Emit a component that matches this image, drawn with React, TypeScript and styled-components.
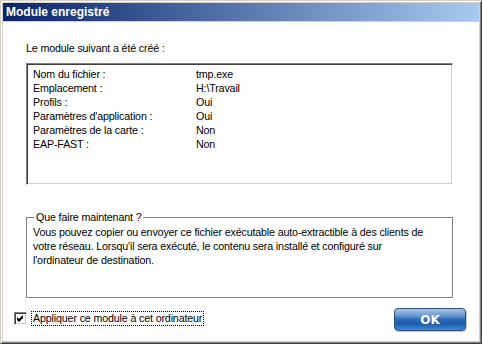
import styled, { createGlobalStyle } from 'styled-components';

const GlobalStyle = createGlobalStyle`
html, body {
  margin: 0;
  padding: 0;
  background: #ffffff;
}
body {
  font-family: "Liberation Sans", Arial, sans-serif;
  font-size: 10.7px;
  letter-spacing: -0.15px;
  color: #000000;
}
`;

const Window = styled.div`
box-sizing: border-box;
width: 482px;
height: 344px;
background: #ffffff;
border: 1px solid;
border-color: #d4d0c8 #404040 #404040 #d4d0c8;
box-shadow: inset 1px 1px 0 #ffffff, inset -1px -1px 0 #808080, inset 2px 2px 0 #d4d0c8, inset -2px -2px 0 #d4d0c8;
padding: 2px;
display: flex;
flex-direction: column;
`;

const TitleBar = styled.div`
height: 18px;
background: linear-gradient(to right, #0a246a, #a6caf0);
color: #ffffff;
font-weight: bold;
font-size: 12px;
letter-spacing: 0;
line-height: 18px;
padding-left: 3px;
border-bottom: 1px solid #d4d0c8;
`;

const Body = styled.div`
flex: 1;
display: flex;
flex-direction: column;
padding: 0 26px 0 23px;
`;

const Intro = styled.div`
margin-top: 20px;
line-height: 13px;
`;

const ListBox = styled.div`
box-sizing: border-box;
margin-top: 8px;
height: 122px;
border: 1px solid;
border-color: #808080 #ffffff #ffffff #808080;
box-shadow: inset 1px 1px 0 #404040, inset -1px -1px 0 #d4d0c8;
padding: 3px 6px 0;
display: grid;
grid-template-columns: 163px 1fr;
grid-auto-rows: 14px;
align-content: start;
`;

const Cell = styled.div`
line-height: 14px;
white-space: nowrap;
`;

const Group = styled.fieldset`
margin: 26px 0 0;
height: 87px;
box-sizing: border-box;
border: 1px solid #808080;
padding: 0 6px;
`;

const Legend = styled.legend`
padding: 0 2px;
margin-left: 1px;
line-height: 13px;
`;

const GroupText = styled.p`
margin: 1px 0 0;
line-height: 14px;
`;

const Footer = styled.div`
display: flex;
align-items: center;
justify-content: space-between;
margin: 8px -13px 0 -12px;
`;

const CheckRow = styled.label`
display: flex;
align-items: center;
gap: 5px;
`;

const CheckBox = styled.span`
box-sizing: border-box;
width: 13px;
height: 13px;
background: #ffffff;
border: 1px solid;
border-color: #808080 #ffffff #ffffff #808080;
box-shadow: inset 1px 1px 0 #404040, inset -1px -1px 0 #d4d0c8;
display: flex;
align-items: center;
justify-content: center;
`;

const CheckLabel = styled.span`
outline: 1px dotted #000000;
padding: 0 1px;
line-height: 13px;
`;

const OkButton = styled.button`
box-sizing: border-box;
width: 72px;
height: 23px;
margin-top: 2px;
border: 1px solid #30507a;
border-radius: 4px;
background: linear-gradient(to bottom, #a9c4e6 0%, #6f9bd0 30%, #2e6fbb 48%, #1d5ba8 70%, #3a8ad8 100%);
box-shadow: 1px 1px 1px rgba(0, 0, 0, 0.25);
color: #ffffff;
font-family: "DejaVu Sans", sans-serif;
font-weight: bold;
font-size: 12px;
letter-spacing: 0;
padding: 0;
`;

const rows: [string, string][] = [
  ['Nom du fichier :', 'tmp.exe'],
  ['Emplacement :', 'H:\\Travail'],
  ['Profils :', 'Oui'],
  ["Paramètres d'application :", 'Oui'],
  ['Paramètres de la carte :', 'Non'],
  ['EAP-FAST :', 'Non'],
];

function App() {
  return (
    <>
      <GlobalStyle />
      <Window>
        <TitleBar>Module enregistré</TitleBar>
        <Body>
          <Intro>Le module suivant a été créé :</Intro>
          <ListBox>
            {rows.flatMap(([label, value]) => [
              <Cell key={`${label}-l`}>{label}</Cell>,
              <Cell key={`${label}-v`}>{value}</Cell>,
            ])}
          </ListBox>

          <Group>
            <Legend>Que faire maintenant ?</Legend>
            <GroupText>
              Vous pouvez copier ou envoyer ce fichier exécutable auto-extractible à des clients de
              <br />
              votre réseau. Lorsqu'il sera exécuté, le contenu sera installé et configuré sur
              <br />
              l'ordinateur de destination.
            </GroupText>
          </Group>

          <Footer>
            <CheckRow>
              <CheckBox>
                <svg width="7" height="7" viewBox="0 0 7 7">
                  <path d="M0 2 L2 4 L6 0 L6 3 L2 7 L0 5 Z" fill="#000000" />
                </svg>
              </CheckBox>
              <CheckLabel>Appliquer ce module à cet ordinateur</CheckLabel>
            </CheckRow>
            <OkButton>OK</OkButton>
          </Footer>
        </Body>
      </Window>
    </>
  );
}

export default App;
